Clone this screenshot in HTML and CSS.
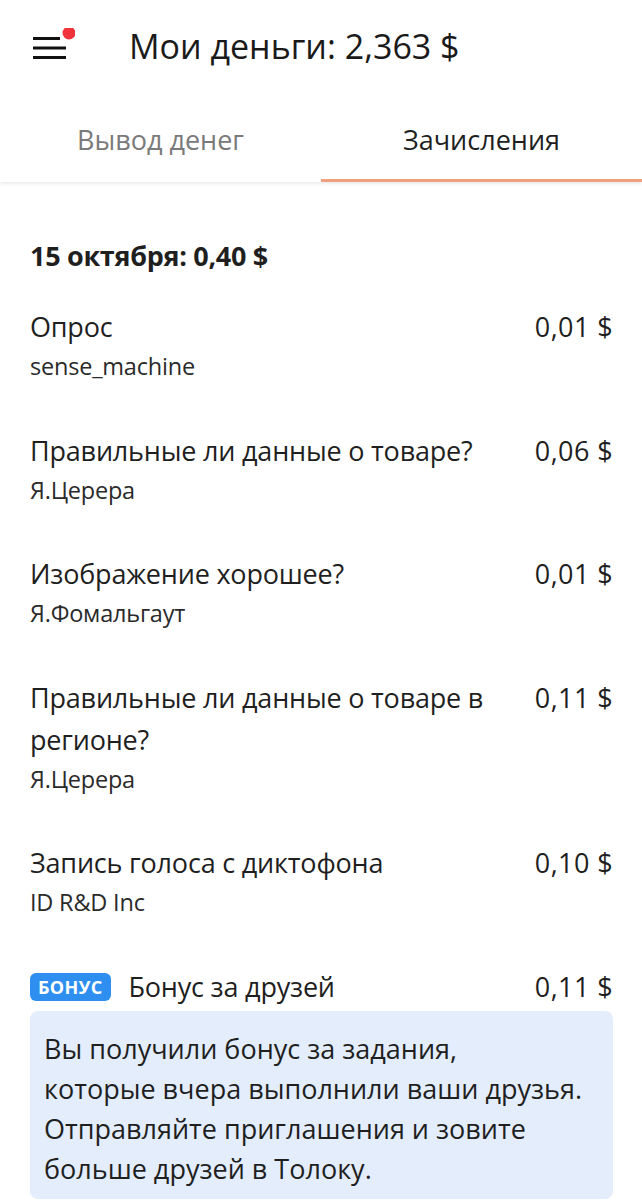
FILE: index.html
```html
<!DOCTYPE html>
<html lang="ru">
<head>
<meta charset="utf-8">
<link rel="stylesheet" href="styles.css">
</head>
<body>
<div class="app">
  <header class="topbar">
    <div class="menu">
      <svg width="44" height="36" viewBox="0 0 44 36">
        <rect x="2" y="9" width="27" height="3" fill="#111"/>
        <rect x="2" y="18.5" width="33" height="3" fill="#111"/>
        <rect x="2" y="28" width="33" height="3" fill="#111"/>
        <circle cx="38" cy="5" r="6.5" fill="#f0323a"/>
      </svg>
    </div>
    <h1 class="title">Мои деньги: 2,363 $</h1>
  </header>
  <nav class="tabs">
    <div class="tab">Вывод денег</div>
    <div class="tab active">Зачисления</div>
  </nav>
  <main class="content">
    <h2 class="day">15 октября: 0,40 $</h2>
    <div class="item">
      <div class="row"><div class="name">Опрос</div><div class="amount">0,01 $</div></div>
      <div class="sub">sense_machine</div>
    </div>
    <div class="item">
      <div class="row"><div class="name">Правильные ли данные о товаре?</div><div class="amount">0,06 $</div></div>
      <div class="sub">Я.Церера</div>
    </div>
    <div class="item">
      <div class="row"><div class="name">Изображение хорошее?</div><div class="amount">0,01 $</div></div>
      <div class="sub">Я.Фомальгаут</div>
    </div>
    <div class="item">
      <div class="row"><div class="name">Правильные ли данные о товаре в регионе?</div><div class="amount">0,11 $</div></div>
      <div class="sub">Я.Церера</div>
    </div>
    <div class="item">
      <div class="row"><div class="name">Запись голоса с диктофона</div><div class="amount">0,10 $</div></div>
      <div class="sub">ID R&amp;D Inc</div>
    </div>
    <div class="item bonus">
      <div class="row"><div class="name"><span class="badge">БОНУС</span>Бонус за друзей</div><div class="amount">0,11 $</div></div>
      <div class="note">Вы получили бонус за задания,<br>которые вчера выполнили ваши друзья.<br>Отправляйте приглашения и зовите<br>больше друзей в Толоку.</div>
    </div>
  </main>
</div>
</body>
</html>
```
FILE: styles.css
```css
* { box-sizing: border-box; }
html, body { margin: 0; padding: 0; background: #fff; }
body {
  font-family: "Open Sans", "Noto Sans", sans-serif;
  color: #1f1f1f;
  width: 642px;
  overflow: hidden;
}
.topbar {
  height: 92px;
  display: flex;
  align-items: center;
  padding-left: 31px;
}
.menu { width: 98px; height: 36px; display: flex; }
.title {
  margin: 0;
  font-weight: 400;
  font-size: 34px;
  letter-spacing: 0;
  color: #1a1a1a;
}
.tabs {
  display: flex;
  height: 90px;
  box-shadow: 0 2px 3px rgba(0,0,0,0.08);
}
.tab {
  flex: 1;
  display: flex;
  align-items: center;
  justify-content: center;
  font-size: 27px;
  letter-spacing: 0;
  color: #7a7a7a;
  padding-top: 7px;
  border-bottom: 3px solid transparent;
}
.tab.active { color: #1f1f1f; border-bottom-color: #f0a07e; }
.content { padding: 56px 29px 0 30px; }
.day {
  margin: 0 0 32px;
  font-size: 27px;
  line-height: 36px;
  font-weight: 700;
  letter-spacing: -0.3px;
}
.item { margin-bottom: 45.5px; }
.row { display: flex; justify-content: space-between; gap: 30px; }
.name {
  font-size: 27px;
  line-height: 42px;
  letter-spacing: -0.2px;
  max-width: 470px;
}
.amount {
  font-size: 27px;
  line-height: 42px;
  white-space: nowrap;
  letter-spacing: 0.4px;
}
.sub {
  font-size: 23.5px;
  line-height: 36px;
  letter-spacing: -0.2px;
  color: #2a2a2a;
}
.badge {
  display: inline-block;
  background: #2f8ff0;
  color: #fff;
  font-size: 18px;
  font-weight: 700;
  line-height: 28px;
  padding: 0 8px;
  border-radius: 6px;
  margin-right: 18px;
  vertical-align: 3px;
  letter-spacing: 0.3px;
}
.note {
  margin-top: 3px;
  background: #e3edfc;
  border-radius: 8px;
  padding: 18px 14px 10px;
  font-size: 27px;
  line-height: 40px;
  letter-spacing: 0;
}
```
